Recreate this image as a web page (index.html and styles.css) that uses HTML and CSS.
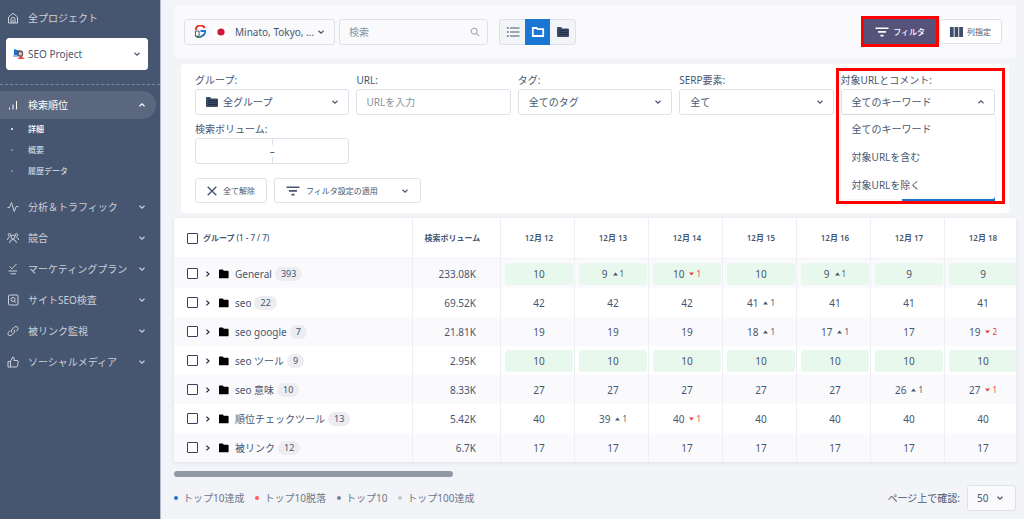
FILE: index.html
```html
<!DOCTYPE html>
<html lang="ja">
<head>
<meta charset="utf-8">
<meta name="viewport" content="width=device-width, initial-scale=1">
<title>検索順位</title>
<link rel="stylesheet" href="styles.css">
</head>
<body>
<svg class="defs" aria-hidden="true">
  <symbol id="down" viewBox="0 0 8 8"><path d="M1.500 2.800 4 5.200 6.500 2.800" fill="none" stroke="currentColor" stroke-width="1.200"/></symbol>
  <symbol id="up" viewBox="0 0 8 8"><path d="M1.500 5.200 4 2.800 6.500 5.200" fill="none" stroke="currentColor" stroke-width="1.200"/></symbol>
  <symbol id="right" viewBox="0 0 8 8"><path d="M2.400 1.600 5 4 2.400 6.400" fill="none" stroke="currentColor" stroke-width="1.200"/></symbol>
  <symbol id="folder" viewBox="0 0 12 10"><path d="M1 1.200Q1 .5 1.800.5H4.600L6 1.800H9.800Q10.600 1.800 10.600 2.700V8.400Q10.600 9.300 9.800 9.300H1.800Q1 9.300 1 8.400Z" fill="currentColor"/></symbol>
  <symbol id="folders" viewBox="0 0 14 12"><path d="M1 1.800Q1 1 1.800 1H5L6.400 2.400H12Q13 2.400 13 3.400V10Q13 11 12 11H2Q1 11 1 10Z" fill="#3b4a66"/><path d="M3.500 4.500H12M3.500 6.500H12M3.500 8.500H12" stroke="#0d1524" stroke-width="1" stroke-dasharray="1 1"/></symbol>
  <symbol id="filter" viewBox="0 0 14 10"><path d="M.5 1.200H13.500M3 4.900H11M5.500 8.600H8.500" fill="none" stroke="currentColor" stroke-width="1.600"/></symbol>
  <symbol id="gain" viewBox="0 0 5 4"><path d="M0 3.400 2.500.6 5 3.400Z" fill="currentColor"/></symbol>
  <symbol id="loss" viewBox="0 0 5 4"><path d="M0 .6 2.500 3.400 5 .6Z" fill="currentColor"/></symbol>
</svg>
<div class="app">
  <aside class="sidebar">
    <a class="nav-item nav-home" href="#">
      <svg class="nav-icon" viewBox="0 0 12 12"><path d="M1.500 5 6 1.200 10.500 5V11H1.500Z M4 11V7.200Q4 5.400 6 5.400T8 7.200V11M6 7.500V11"/></svg>
      <span>全プロジェクト</span>
    </a>
    <div class="select project">
      <svg class="lead" viewBox="0 0 12 12"><path d="M1 1 7 3 6 7 1 9Z" fill="#1a73cf"/><path d="M0 7H5V9H0Z" fill="#8fc2f4"/><path d="M4.500 11 8 7 11.500 11Z" fill="#ef4b4b"/><circle cx="7" cy="5.400" r="3.200" fill="#5b5560"/><circle cx="7.300" cy="5.800" r="1.700" fill="#f0c4b4"/></svg>
      <select aria-label="プロジェクト"><option>SEO Project</option></select>
      <svg class="chev"><use href="#down"/></svg>
    </div>
    <nav class="nav">
      <a class="nav-item active" href="#">
        <svg class="nav-icon" viewBox="0 0 12 12"><path d="M2.500 10.500V8.500M6 10.500V5.500M9.500 10.500V2"/></svg>
        <span>検索順位</span><svg class="chev"><use href="#up"/></svg>
      </a>
      <ul class="subnav">
        <li><a class="current" href="#">詳細</a></li>
        <li><a href="#">概要</a></li>
        <li><a href="#">履歴データ</a></li>
      </ul>
      <a class="nav-item" href="#">
        <svg class="nav-icon" viewBox="0 0 12 12"><path d="M.5 6.500H2.500L4.500 1.500 7.200 10.500 9.200 5.500H11.500"/></svg>
        <span>分析＆トラフィック</span><svg class="chev"><use href="#down"/></svg>
      </a>
      <a class="nav-item" href="#">
        <svg class="nav-icon" viewBox="0 0 12 12"><circle cx="6" cy="5" r="1.900"/><circle cx="2.500" cy="2.800" r="1.300"/><circle cx="9.500" cy="2.800" r="1.300"/><path d="M2.500 11Q3 7.500 6 7.500T9.500 11M.5 8Q.6 5.500 2.500 5.300M11.500 8Q11.400 5.500 9.500 5.300"/></svg>
        <span>競合</span><svg class="chev"><use href="#down"/></svg>
      </a>
      <a class="nav-item" href="#">
        <svg class="nav-icon" viewBox="0 0 12 12"><path d="M2.500 3.500 4.800 5.800 9.500 1M1.500 8H10M3.500 10.800H9"/></svg>
        <span>マーケティングプラン</span><svg class="chev"><use href="#down"/></svg>
      </a>
      <a class="nav-item" href="#">
        <svg class="nav-icon" viewBox="0 0 12 12"><rect x="1.500" y="1" width="9.500" height="10" rx="1"/><circle cx="6" cy="5.500" r="2"/><path d="M7.500 7 9 8.800"/></svg>
        <span>サイトSEO検査</span><svg class="chev"><use href="#down"/></svg>
      </a>
      <a class="nav-item" href="#">
        <svg class="nav-icon" viewBox="0 0 12 12"><path d="M5 7.500Q3.500 6 5 4.500L7.500 2Q9 .8 10.400 2T10.500 5L9 6.500M7 4.700Q8.500 6 7 7.700L4.500 10.200Q3 11.400 1.600 10.200T1.500 7.200L3 5.700"/></svg>
        <span>被リンク監視</span><svg class="chev"><use href="#down"/></svg>
      </a>
      <a class="nav-item" href="#">
        <svg class="nav-icon" viewBox="0 0 12 12"><path d="M1 5.500H3.500V11H1ZM3.500 5.500 5.800 1Q7.500 1.200 7.200 3L7 4.500H10.300Q11.500 4.700 11.200 6L10.500 10Q10.300 11 9.300 11H3.500"/></svg>
        <span>ソーシャルメディア</span><svg class="chev"><use href="#down"/></svg>
      </a>
    </nav>
  </aside>

  <main class="main">
    <header class="topbar">
      <div class="select region">
        <span class="lead engine">
          <svg class="google" viewBox="0 0 14 14"><path d="M11.500 3.300A5 5 0 0 0 2 5.500" fill="none" stroke="#e8392f" stroke-width="2.200"/><path d="M7 6.500H12Q12 11.500 7.500 12" fill="none" stroke="#1d78d2" stroke-width="2"/><path d="M2 11.800A5 5 0 0 0 8.500 12" fill="none" stroke="#3f7d5c" stroke-width="1.800"/><path d="M1.500 6.500H5.500V12H1.500Z" fill="#fff" stroke="#3e4e69" stroke-width="1"/></svg>
          <svg class="flag" viewBox="0 0 14 10"><rect width="14" height="10" fill="#fff"/><circle cx="7" cy="5" r="3.600" fill="#cf1736"/></svg>
        </span>
        <select aria-label="地域"><option>Minato, Tokyo, ...</option></select>
        <svg class="chev"><use href="#down"/></svg>
      </div>
      <div class="search">
        <input type="search" placeholder="検索" aria-label="検索">
        <svg class="search-icon" viewBox="0 0 12 12"><circle cx="5" cy="5" r="3.500"/><path d="M7.600 7.600 11 11"/></svg>
      </div>
      <div class="views">
        <button type="button" aria-label="リスト"><svg viewBox="0 0 14 12"><path d="M4 2H13.500M4 6H13.500M4 10H13.500" stroke="#475670" stroke-width="1.200"/><path d="M1 2H2.500M1 6H2.500M1 10H2.500" stroke="#475670" stroke-width="1.300"/></svg></button>
        <button type="button" class="on" aria-label="フォルダ"><svg viewBox="0 0 14 12"><path d="M1.800 2H5.500L6.500 3.200H12.200V10H1.800Z" fill="none" stroke="#fff" stroke-width="1.800"/></svg></button>
        <button type="button" aria-label="サブフォルダ"><svg><use href="#folders"/></svg></button>
      </div>
      <div class="tools">
        <button type="button" class="btn filter-toggle"><svg class="i-filter"><use href="#filter"/></svg>フィルタ</button>
        <button type="button" class="btn"><svg class="i-cols" viewBox="0 0 13 10"><path d="M0 0H3.700V10H0ZM4.600 0H8.300V10H4.600ZM9.200 0H13V10H9.200Z" fill="#3f4e69"/></svg>列指定</button>
      </div>
    </header>

    <form class="filters">
      <div class="fields">
        <div class="field">
          <label for="group">グループ:</label>
          <div class="select with-folder"><svg class="lead"><use href="#folders"/></svg><select id="group"><option>全グループ</option></select><svg class="chev"><use href="#down"/></svg></div>
        </div>
        <div class="field">
          <label for="url">URL:</label>
          <input id="url" class="text" type="text" placeholder="URLを入力">
        </div>
        <div class="field">
          <label for="tag">タグ:</label>
          <div class="select"><select id="tag"><option>全てのタグ</option></select><svg class="chev"><use href="#down"/></svg></div>
        </div>
        <div class="field">
          <label for="serp">SERP要素:</label>
          <div class="select"><select id="serp"><option>全て</option></select><svg class="chev"><use href="#down"/></svg></div>
        </div>
        <div class="field marked">
          <label for="target">対象URLとコメント:</label>
          <div class="select"><select id="target"><option>全てのキーワード</option></select><svg class="chev"><use href="#up"/></svg>
            <ul class="menu" role="listbox" aria-label="対象URLとコメント">
              <li role="option">全てのキーワード</li>
              <li role="option">対象URLを含む</li>
              <li role="option">対象URLを除く</li>
            </ul>
          </div>
        </div>
        <div class="field">
          <label for="vmin">検索ボリューム:</label>
          <div class="range"><input id="vmin" type="text"><span>–</span><input type="text" aria-label="検索ボリューム最大"></div>
        </div>
      </div>
      <div class="actions">
        <button type="button" class="btn"><svg class="i-x" viewBox="0 0 10 10"><path d="M.7.7 9.300 9.300M9.300.7.7 9.300" stroke="currentColor" stroke-width="1.400"/></svg>全て解除</button>
        <button type="button" class="btn preset"><svg class="i-filter"><use href="#filter"/></svg>フィルタ設定の適用<svg class="chev"><use href="#down"/></svg></button>
        <button type="submit" class="btn apply" aria-label="適用"></button>
      </div>
    </form>

    <div class="table-wrap">
      <table class="ranks">
        <colgroup><col class="c-name"><col class="c-vol"><col span="7"></colgroup>
        <thead>
          <tr><th><div class="name"><input type="checkbox" aria-label="全て選択"><span>グループ <small>(1 - 7 / 7)</small></span></div></th><th>検索ボリューム</th><th>12月 12</th><th>12月 13</th><th>12月 14</th><th>12月 15</th><th>12月 16</th><th>12月 17</th><th>12月 18</th></tr>
        </thead>
        <tbody>
          <tr class="top">
            <td><div class="name"><input type="checkbox" aria-label="General"><svg class="exp"><use href="#right"/></svg><svg class="fold"><use href="#folder"/></svg><span>General</span><b>393</b></div></td><td>233.08K</td>
            <td><div>10</div></td><td><div>9<i><svg><use href="#gain"/></svg>1</i></div></td><td><div>10<i class="neg"><svg><use href="#loss"/></svg>1</i></div></td><td><div>10</div></td><td><div>9<i><svg><use href="#gain"/></svg>1</i></div></td><td><div>9</div></td><td><div>9</div></td>
          </tr>
          <tr>
            <td><div class="name"><input type="checkbox" aria-label="seo"><svg class="exp"><use href="#right"/></svg><svg class="fold"><use href="#folder"/></svg><span>seo</span><b>22</b></div></td><td>69.52K</td>
            <td><div>42</div></td><td><div>42</div></td><td><div>42</div></td><td><div>41<i><svg><use href="#gain"/></svg>1</i></div></td><td><div>41</div></td><td><div>41</div></td><td><div>41</div></td>
          </tr>
          <tr>
            <td><div class="name"><input type="checkbox" aria-label="seo google"><svg class="exp"><use href="#right"/></svg><svg class="fold"><use href="#folder"/></svg><span>seo google</span><b>7</b></div></td><td>21.81K</td>
            <td><div>19</div></td><td><div>19</div></td><td><div>19</div></td><td><div>18<i><svg><use href="#gain"/></svg>1</i></div></td><td><div>17<i><svg><use href="#gain"/></svg>1</i></div></td><td><div>17</div></td><td><div>19<i class="neg"><svg><use href="#loss"/></svg>2</i></div></td>
          </tr>
          <tr class="top">
            <td><div class="name"><input type="checkbox" aria-label="seo ツール"><svg class="exp"><use href="#right"/></svg><svg class="fold"><use href="#folder"/></svg><span>seo ツール</span><b>9</b></div></td><td>2.95K</td>
            <td><div>10</div></td><td><div>10</div></td><td><div>10</div></td><td><div>10</div></td><td><div>10</div></td><td><div>10</div></td><td><div>10</div></td>
          </tr>
          <tr>
            <td><div class="name"><input type="checkbox" aria-label="seo 意味"><svg class="exp"><use href="#right"/></svg><svg class="fold"><use href="#folder"/></svg><span>seo 意味</span><b>10</b></div></td><td>8.33K</td>
            <td><div>27</div></td><td><div>27</div></td><td><div>27</div></td><td><div>27</div></td><td><div>27</div></td><td><div>26<i><svg><use href="#gain"/></svg>1</i></div></td><td><div>27<i class="neg"><svg><use href="#loss"/></svg>1</i></div></td>
          </tr>
          <tr>
            <td><div class="name"><input type="checkbox" aria-label="順位チェックツール"><svg class="exp"><use href="#right"/></svg><svg class="fold"><use href="#folder"/></svg><span>順位チェックツール</span><b>13</b></div></td><td>5.42K</td>
            <td><div>40</div></td><td><div>39<i><svg><use href="#gain"/></svg>1</i></div></td><td><div>40<i class="neg"><svg><use href="#loss"/></svg>1</i></div></td><td><div>40</div></td><td><div>40</div></td><td><div>40</div></td><td><div>40</div></td>
          </tr>
          <tr>
            <td><div class="name"><input type="checkbox" aria-label="被リンク"><svg class="exp"><use href="#right"/></svg><svg class="fold"><use href="#folder"/></svg><span>被リンク</span><b>12</b></div></td><td>6.7K</td>
            <td><div>17</div></td><td><div>17</div></td><td><div>17</div></td><td><div>17</div></td><td><div>17</div></td><td><div>17</div></td><td><div>17</div></td>
          </tr>
        </tbody>
      </table>
    </div>
    <div class="scroll"><div class="thumb"></div></div>

    <footer class="footer">
      <ul class="legend">
        <li class="l-blue">トップ10達成</li>
        <li class="l-red">トップ10脱落</li>
        <li class="l-slate">トップ10</li>
        <li class="l-grey">トップ100達成</li>
      </ul>
      <div class="pager">
        <label for="size">ページ上で確認:</label>
        <div class="select"><select id="size"><option>50</option></select><svg class="chev"><use href="#down"/></svg></div>
      </div>
    </footer>
  </main>
</div>
</body>
</html>
```

FILE: styles.css
```css
* { box-sizing: border-box; }

body {
  margin: 0;
  background: #f3f4f8;
  color: #475670;
  font: 10px/14px "Noto Sans", "Noto Sans CJK JP", sans-serif;
}

ul { margin: 0; padding: 0; list-style: none; }
a { color: inherit; text-decoration: none; }
button, input, select { font: inherit; color: inherit; margin: 0; }
.defs { position: absolute; width: 0; height: 0; }
.chev { width: 8px; height: 8px; flex: none; }

.app { display: flex; min-height: 100vh; }

/* Sidebar */
.sidebar {
  flex: none;
  width: 161px;
  padding-top: 2px;
  background: #475670;
  border-right: 1px solid #b5bbc8;
  color: #ccd0d8;
}
.nav-item {
  display: flex;
  align-items: center;
  gap: 9px;
  height: 31px;
  margin-right: 4px;
  padding: 0 10px 0 7px;
}
.nav-item span { flex: 1; white-space: nowrap; }
.nav-icon {
  width: 12px;
  height: 12px;
  fill: none;
  stroke: currentColor;
  stroke-width: 1;
}
.project { margin: 5px 12px 0 6px; }
.nav {
  margin-top: 14px;
  padding-top: 6px;
  border-top: 1px dashed #7c879b;
}
.nav-item.active {
  height: 28px;
  background: #5a677f;
  border-radius: 0 14px 14px 0;
  color: #fff;
}
.subnav { margin: -1px 0 10px; font-size: 8px; font-weight: 500; }
.subnav a {
  display: flex;
  align-items: center;
  gap: 15px;
  height: 21px;
  padding-left: 11px;
}
.subnav a::before {
  content: "";
  width: 2px;
  height: 2px;
  border-radius: 1px;
  background: #8b95a6;
}
.subnav .current { color: #fff; }
.subnav .current::before { background: #fff; }

/* Controls */
.select {
  position: relative;
  color: #475670;
}
.select select {
  display: block;
  width: 100%;
  height: 26px;
  padding: 0 24px 0 10px;
  appearance: none;
  background: #fff;
  border: 1px solid #dfe1ea;
  border-radius: 3px;
}
.select .chev {
  position: absolute;
  right: 10px;
  top: 50%;
  margin-top: -4px;
  pointer-events: none;
}
.select .lead {
  position: absolute;
  left: 10px;
  top: 50%;
  pointer-events: none;
}
.project select { height: 32px; padding-left: 21px; border-color: #fff; }
.project .lead { left: 7px; width: 12px; height: 12px; margin-top: -6px; }
.project .chev { right: 7px; }
.with-folder select { padding-left: 27px; }
.with-folder .lead { width: 14px; height: 12px; margin-top: -6px; }

.btn {
  display: inline-flex;
  align-items: center;
  gap: 6px;
  height: 25px;
  padding: 0 11px;
  background: #fff;
  border: 1px solid #dfe1ea;
  border-radius: 3px;
  font-size: 8px;
  white-space: nowrap;
}
.i-filter { width: 14px; height: 10px; }
.i-cols { width: 13px; height: 10px; }
.i-x { width: 10px; height: 10px; }

.main { flex: 1; min-width: 0; padding: 5px 8px 8px 13px; }

/* Top bar */
.topbar {
  display: flex;
  align-items: center;
  height: 53px;
  padding: 0 14px 0 10px;
  background: #fafafc;
  border-radius: 4px;
}
.region { width: 151px; margin-right: 4px; }
.region select { padding-left: 50px; padding-right: 16px; background: #fafafc; }
.engine { display: flex; align-items: center; gap: 7px; height: 14px; margin-top: -7px; }
.google { width: 13px; height: 13px; }
.flag { width: 14px; height: 10px; }
.search { position: relative; width: 149px; margin-right: 11px; }
.search input, .text {
  display: block;
  width: 100%;
  height: 26px;
  padding: 0 9px;
  background: #fff;
  border: 1px solid #dfe1ea;
  border-radius: 3px;
  appearance: none;
}
.search input { background: #fafafc; }
::placeholder { color: #8a92a0; opacity: 1; }
.search-icon {
  position: absolute;
  right: 8px;
  top: 8px;
  width: 10px;
  height: 10px;
  fill: none;
  stroke: #a4aab5;
  stroke-width: 1.3px;
}
.views {
  display: flex;
  height: 26px;
  border: 1px solid #dfe1ea;
  border-radius: 3px;
  background: #f3f4f8;
}
.views button {
  display: grid;
  place-items: center;
  width: 25px;
  height: 24px;
  padding: 0;
  border: 0;
  background: none;
}
.views .on { height: 26px; margin-top: -1px; background: #1976d2; }
.views svg { width: 14px; height: 12px; }
.tools { display: flex; gap: 3px; margin-left: auto; }
.tools .btn { gap: 4px; padding: 0 10px; }
.tools .filter-toggle {
  background: #57527a;
  border-color: #57527a;
  border-radius: 0;
  color: #fff;
  font-weight: 500;
  outline: 3px solid #fe0000;
}

/* Filters */
.filters {
  margin: 6px 7px 5px;
  padding: 9px 14px 10px;
  background: #fff;
  border-radius: 4px;
}
.fields {
  display: grid;
  grid-template-columns: repeat(5, minmax(0, 1fr));
  gap: 7px;
}
.field { display: grid; grid-template-columns: minmax(0, 1fr); gap: 2px; }
.marked { position: relative; }
.marked::after {
  content: "";
  position: absolute;
  z-index: 3;
  inset: -5px -10px -89px -5px;
  border: 3px solid #fe0000;
  pointer-events: none;
}
.menu {
  position: absolute;
  z-index: 2;
  top: 26px;
  left: 0;
  right: 0;
  height: 84px;
  background: #fff;
  border-radius: 0 0 3px 3px;
  box-shadow: 0 0 2px #47567033;
}
.menu li { height: 28px; padding: 7px 11px; }
.range {
  display: flex;
  align-items: center;
  height: 26px;
  border: 1px solid #dfe1ea;
  border-radius: 3px;
}
.range input {
  flex: 1;
  min-width: 0;
  height: 24px;
  padding: 0 8px;
  border: 0;
  background: none;
}
.range span {
  width: 8px;
  height: 24px;
  line-height: 24px;
  text-align: center;
  background: linear-gradient(#fff, #fff) center / 8px 12px no-repeat, linear-gradient(#dfe1ea, #dfe1ea) center / 1px 24px no-repeat;
}
.actions { display: flex; gap: 7px; margin-top: 14px; }
.preset { width: 147px; }
.preset .chev { margin-left: auto; }
.apply { width: 93px; margin-left: auto; background: #1976d2; border-color: #1976d2; }

/* Rankings */
.table-wrap {
  overflow: hidden;
  background: #fff;
  border-radius: 3px;
  box-shadow: 0 1px 4px #4756701f;
}
.ranks {
  width: 100%;
  min-width: 845px;
  table-layout: fixed;
  border-collapse: separate;
  border-spacing: 0;
}
.c-name { width: 239px; }
.c-vol { width: 88px; }
.ranks th {
  height: 41px;
  padding: 0;
  border-bottom: 1px solid #f0f0f5;
  border-right: 1px solid #eeeff4;
  font-size: 8px;
  font-weight: 600;
}
.ranks th + th { padding-left: 3px; }
.ranks th:nth-child(2) { padding: 0 8px 0 0; }
.ranks td {
  height: 29px;
  padding: 0 1px 0 4px;
  border-right: 1px solid #eeeff4;
}
.ranks tbody tr:nth-child(odd) { background: #fafafc; }
.ranks td:first-child { padding: 0; }
.ranks td:nth-child(2) { padding-right: 24px; text-align: right; }
.ranks td > div {
  display: flex;
  align-items: center;
  justify-content: center;
  height: 22px;
  border-radius: 3px;
}
.top td + td > div { background: #e9f8ec; }
.ranks .name {
  display: flex;
  align-items: center;
  justify-content: flex-start;
  padding-left: 13px;
  text-align: left;
}
.name input {
  width: 11px;
  height: 11px;
  margin-right: 5px;
  appearance: none;
  border: 1px solid #33435f;
  border-radius: 1px;
  background: #fff;
}
.name small { font-size: 8px; font-weight: 500; }
.exp { width: 8px; height: 8px; margin: 0 6px 0 1px; color: #222c3d; }
.fold { width: 12px; height: 10px; margin-right: 5px; color: #000; }
.name b {
  margin-left: 3px;
  padding: 0 6px;
  border-radius: 7px;
  background: #ececf1;
  font-size: 9px;
  font-weight: 400;
}
.ranks i {
  display: flex;
  align-items: center;
  gap: 2px;
  margin-left: 5px;
  font-size: 8px;
  font-style: normal;
}
.ranks i svg { width: 5px; height: 4px; }
.ranks .neg { color: #f03a3a; }

.scroll { margin-top: 9px; }
.thumb { width: 33.1%; height: 6px; border-radius: 3px; background: #9299a2; }

/* Footer */
.footer { display: flex; align-items: center; justify-content: space-between; margin-top: 8px; }
.legend { display: flex; gap: 11px; color: #6d7788; }
.legend li { display: flex; align-items: center; gap: 5px; }
.legend li::before {
  content: "";
  width: 4px;
  height: 4px;
  border-radius: 2px;
  background: currentColor;
}
.l-blue::before { color: #1976d2; }
.l-red::before { color: #ff5a5a; }
.l-slate::before { color: #76849a; }
.l-grey::before { color: #c3c7ce; }
.pager { display: flex; align-items: center; gap: 7px; }
.pager .select { width: 49px; }
.pager select { padding-left: 9px; padding-right: 20px; background: #fafafc; }
.pager .chev { right: 12px; }
```
